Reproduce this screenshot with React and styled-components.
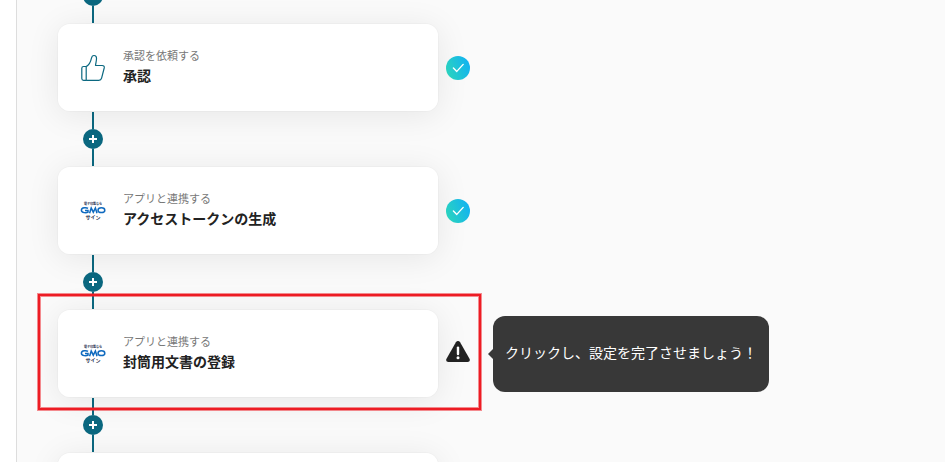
import React from "react";
import styled, { createGlobalStyle } from "styled-components";

const steps = [
  { id: 1, icon: "thumb", label: "承認を依頼する", title: "承認", status: "done" },
  { id: 2, icon: "gmo", label: "アプリと連携する", title: "アクセストークンの生成", status: "done" },
  {
    id: 3,
    icon: "gmo",
    label: "アプリと連携する",
    title: "封筒用文書の登録",
    status: "warning",
    message: "クリックし、設定を完了させましょう！",
    highlighted: true,
  },
  // 未設定のステップ
  { id: 4 },
];

const ThumbIcon = () => (
  <svg width="24" height="28" viewBox="0 0 24 28" fill="none" stroke="#0b6880" strokeWidth="1.2" strokeLinejoin="round" aria-hidden="true">
    <path d="M5.2 12.6 C8.2 11 9.6 8.2 10.4 4.4 C10.8 2.4 11.6 1.5 13 1.5 C14.8 1.5 15.6 2.8 15.5 4.8 C15.4 7.2 14.8 9.2 14.5 11.5 H21.2 C22.8 11.5 23.5 12.6 23.2 14 L20.6 24.2 C20.2 25.8 19.4 26.4 17.8 26.4 H5.2" />
    <path d="M2.6 12.5 H5.2 V26.4 H2.6 C1.4 26.4 0.8 25.7 0.8 24.6 V14.3 C0.8 13.2 1.4 12.5 2.6 12.5 Z" />
  </svg>
);

const GmoLogo = () => (
  <svg width="26" height="20" viewBox="0 0 26 20" role="img" aria-label="電子印鑑なら GMOサイン">
    <g fill="#1a2a4a" textAnchor="middle" fontFamily="'Noto Sans CJK JP', sans-serif" fontWeight="700">
      <text x="13" y="4" fontSize="3">電子印鑑なら</text>
      <text x="13" y="18" fontSize="5">サイン</text>
    </g>
    <g fill="none" stroke="#0f6abf" strokeWidth="1.5">
      <path d="M8 7.4 C6.6 6.4 1.4 6.2 1.4 9.2 C1.4 12.2 6.6 12 8 11.2 V9.4 H5" />
      <path d="M9.6 12.2 L11.2 7 L13.3 11.2 L15.4 7 L17 12.2" />
      <ellipse cx="21.4" cy="9.2" rx="3.4" ry="2.4" />
    </g>
  </svg>
);

const DoneIcon = () => (
  <svg width="24" height="24" viewBox="0 0 24 24" role="img" aria-label="完了">
    <defs>
      <linearGradient id="doneFill" x1="0" y1="0.7" x2="1" y2="0.3">
        <stop offset="0" stopColor="#2bd4bd" />
        <stop offset="1" stopColor="#12b2f2" />
      </linearGradient>
    </defs>
    <circle cx="12" cy="12" r="12" fill="url(#doneFill)" />
    <path d="M7.4 12 L10.8 15.4 L17.2 8.4" fill="none" stroke="#fff" strokeWidth="1.4" strokeLinecap="round" strokeLinejoin="round" />
  </svg>
);

const WarningIcon = () => (
  <svg width="24" height="28" viewBox="0 0 24 28" role="img" aria-label="未設定">
    <path d="M9.9 2.2 C10.8 0.7 13.2 0.7 14.1 2.2 L23.5 18.8 C24.4 20.4 23.4 22 21.6 22 H2.4 C0.6 22 -0.4 20.4 0.5 18.8 Z" fill="#222" />
    <path d="M12 7.6 V14" stroke="#fff" strokeWidth="2.4" strokeLinecap="round" />
    <circle cx="12" cy="17.8" r="1.5" fill="#fff" />
  </svg>
);

const Connector = () => (
  <ConnectorBox>
    <Line />
    <AddButton type="button" aria-label="ステップを追加">
      <svg width="8" height="8" viewBox="0 0 8 8" stroke="#fff" strokeWidth="2">
        <path d="M4 0 V8 M0 4 H8" />
      </svg>
    </AddButton>
    <Line />
  </ConnectorBox>
);

const Step = ({ step }) => (
  <StepRow>
    <Card type="button">
      {step.icon && <IconBox>{step.icon === "thumb" ? <ThumbIcon /> : <GmoLogo />}</IconBox>}
      {step.title && (
        <CardText>
          <Label>{step.label}</Label>
          <Title>{step.title}</Title>
        </CardText>
      )}
    </Card>
    {step.status && <Status>{step.status === "done" ? <DoneIcon /> : <WarningIcon />}</Status>}
    {step.message && <Tooltip role="tooltip">{step.message}</Tooltip>}
    {step.highlighted && <Highlight />}
  </StepRow>
);

const App = () => {
  return (
    <>
      <GlobalStyle />
      <Page>
        <Canvas>
          <Flow>
            {steps.map((step) => (
              <React.Fragment key={step.id}>
                <Connector />
                <Step step={step} />
              </React.Fragment>
            ))}
          </Flow>
        </Canvas>
      </Page>
    </>
  );
};

export default App;

const GlobalStyle = createGlobalStyle`
  * {
    box-sizing: border-box;
  }

  body {
    margin: 0;
    background: #fff;
    color: #222;
    font-family: "Noto Sans CJK JP", "Noto Sans", sans-serif;
  }

  button {
    font: inherit;
    color: inherit;
    cursor: pointer;
  }
`;

const Page = styled.div`
  height: 100vh;
  padding-left: 16px;
  overflow: hidden;
`;

const Canvas = styled.main`
  height: 100%;
  padding-left: 40px;
  overflow: hidden;
  background: #fafafa;
  border-left: 1px solid #ddd;
`;

/* the flow is scrolled part of the way into its first connector */
const Flow = styled.div`
  display: flex;
  flex-direction: column;
  align-items: flex-start;
  margin-top: -31px;
`;

const ConnectorBox = styled.div`
  display: flex;
  flex-direction: column;
  align-items: center;
  width: 72px;
  height: 54px;
`;

const Line = styled.div`
  flex: 1;
  width: 2px;
  background: #0b6880;
`;

const AddButton = styled.button`
  display: flex;
  align-items: center;
  justify-content: center;
  width: 20px;
  height: 20px;
  padding: 0;
  background: #0b6880;
  border: none;
  border-radius: 50%;
`;

const StepRow = styled.div`
  position: relative;
  display: flex;
  align-items: center;
`;

const Card = styled.button`
  display: flex;
  align-items: center;
  gap: 16px;
  width: 382px;
  min-height: 89px;
  padding: 0 21px;
  text-align: left;
  background: #fff;
  background-clip: padding-box;
  border: 1px solid rgba(0, 0, 0, 0.02);
  border-radius: 13px;
  box-shadow: 0 4px 32px rgba(0, 0, 0, 0.08);
`;

const IconBox = styled.span`
  display: flex;
  align-items: center;
  justify-content: center;
  width: 28px;
  height: 28px;
`;

const CardText = styled.span`
  display: flex;
  flex-direction: column;
  padding-bottom: 6px;
`;

const Label = styled.span`
  font-size: 11px;
  line-height: 20px;
  color: #777;
`;

const Title = styled.span`
  font-size: 14px;
  font-weight: 700;
  line-height: 20px;
`;

const Status = styled.div`
  display: flex;
  margin-left: 7px;
`;

const Tooltip = styled.div`
  position: relative;
  display: flex;
  align-items: center;
  min-height: 76px;
  margin-left: 23px;
  padding: 0 12px 4px;
  font-size: 14px;
  line-height: 20px;
  color: #fff;
  background: #383838;
  border-radius: 12px;

  &::before {
    content: "";
    position: absolute;
    top: 50%;
    right: 100%;
    border: 5px solid transparent;
    border-left-width: 0;
    border-right-color: #383838;
    transform: translateY(-50%);
  }
`;

const Highlight = styled.div`
  position: absolute;
  top: -15px;
  bottom: -12px;
  left: -19px;
  width: 443px;
  border: 2px solid #ed1c24;
  box-shadow: 0 0 0 1px rgba(237, 28, 36, 0.5), inset 0 0 0 1px rgba(237, 28, 36, 0.5);
  pointer-events: none;
`;
